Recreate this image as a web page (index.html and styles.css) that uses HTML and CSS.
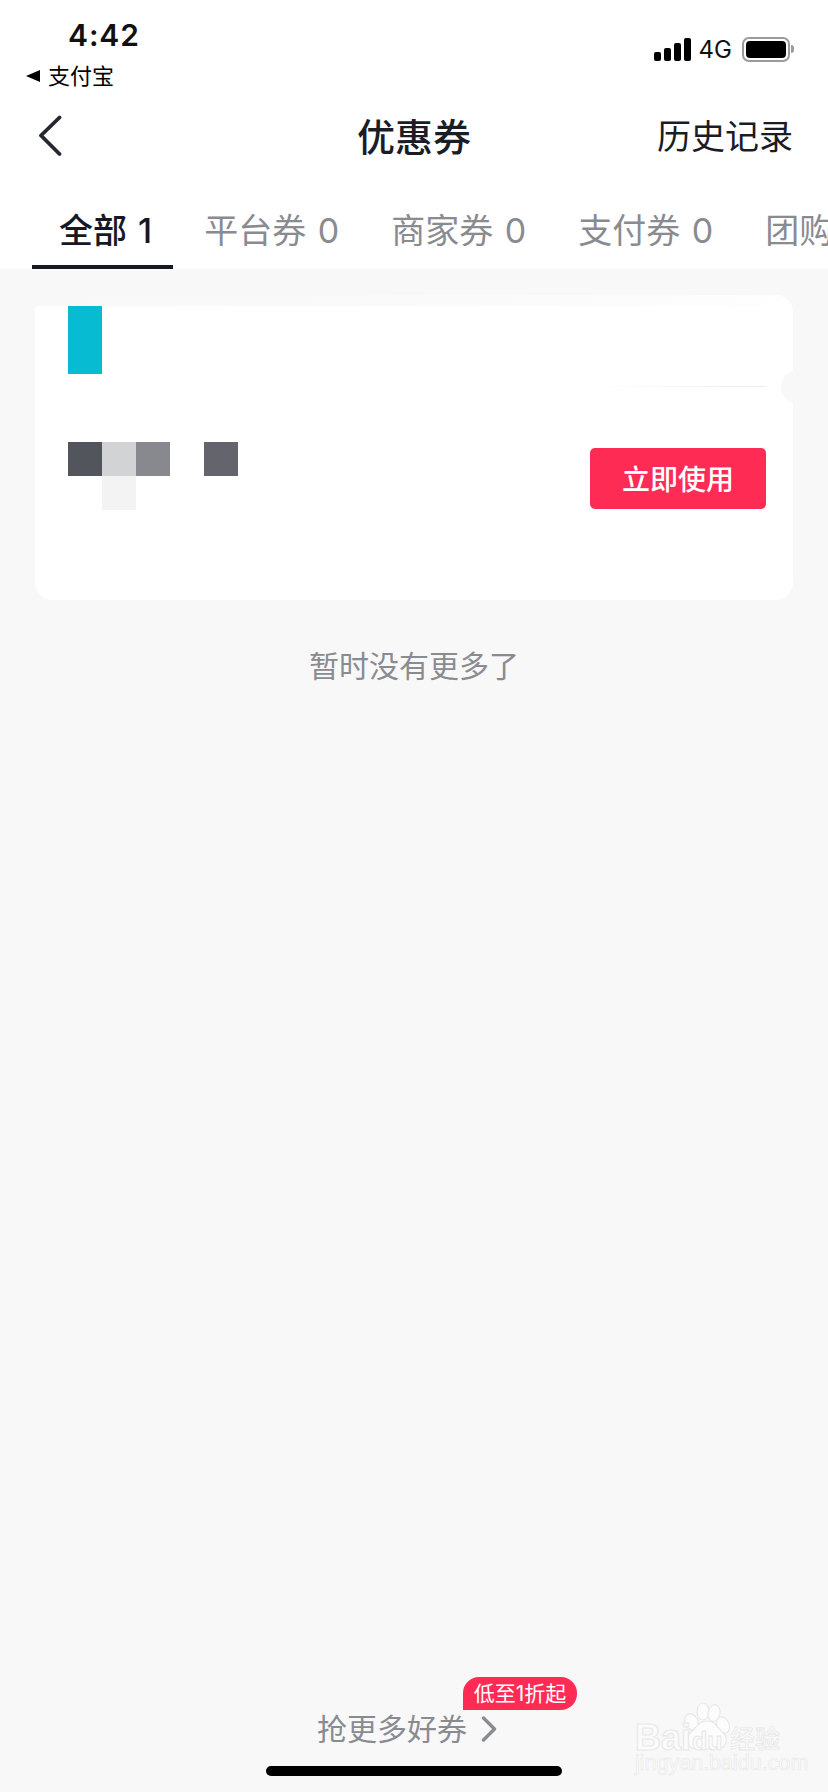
FILE: index.html
```html
<!DOCTYPE html>
<html lang="zh">
<head>
<meta charset="utf-8">
<title>优惠券</title>
<link rel="stylesheet" href="styles.css">
</head>
<body>
<div class="page">
  <header class="head">
    <div class="status">
      <div class="status-left">
        <div class="time">4:42</div>
        <div class="return"><span class="tri"></span><span>支付宝</span></div>
      </div>
      <div class="status-right">
        <span class="signal"><i class="b1"></i><i class="b2"></i><i class="b3"></i><i class="b4"></i></span>
        <span class="net">4G</span>
        <span class="battery"><span class="level"></span></span>
        <span class="nub"></span>
      </div>
    </div>
    <nav class="navbar">
      <svg class="back" width="24" height="42" viewBox="0 0 24 42"><path d="M21.5 2.5 3 20.5 21.5 39" fill="none" stroke="#242630" stroke-width="3.8" stroke-linecap="round" stroke-linejoin="round"/></svg>
      <h1 class="title">优惠券</h1>
      <span class="history">历史记录</span>
    </nav>
    <div class="tabs">
      <span class="tab active">全部 1</span>
      <span class="tab">平台券 0</span>
      <span class="tab">商家券 0</span>
      <span class="tab">支付券 0</span>
      <span class="tab">团购</span>
    </div>
  </header>

  <main class="content">
    <section class="card">
      <div class="card-top"><div class="logo-block"></div></div>
      <div class="card-bottom">
        <div class="mosaic">
          <i class="m1"></i><i class="m2"></i><i class="m3"></i><i class="m0"></i><i class="m4"></i>
          <i class="m0"></i><i class="m5"></i>
        </div>
        <button class="use">立即使用</button>
      </div>
      <span class="rule"></span>
      <span class="notch"></span>
    </section>
    <p class="nomore">暂时没有更多了</p>
  </main>

  <footer class="foot">
    <div class="more">
      <span>抢更多好券</span>
      <svg class="more-arrow" width="16" height="26" viewBox="0 0 16 26"><path d="M2.5 2 13.5 13 2.5 24" fill="none" stroke="#8a8b91" stroke-width="3.4" stroke-linecap="round" stroke-linejoin="round"/></svg>
      <span class="badge">低至1折起</span>
    </div>
    <div class="home"></div>
  </footer>

  <svg class="mark" width="190" height="102" viewBox="0 0 190 102">
    <g class="mark-shape">
      <ellipse cx="71.5" cy="32" rx="6.5" ry="8.5" transform="rotate(-25 71.5 32)"/>
      <ellipse cx="83" cy="21.5" rx="6" ry="8.5"/>
      <ellipse cx="94" cy="23" rx="6" ry="8.5" transform="rotate(10 94 23)"/>
      <ellipse cx="103" cy="35" rx="6" ry="8.5" transform="rotate(-25 103 35)"/>
      <path d="M87 31c8 0 11 7 16 12 5 4 4 13-2 15-5 2-9 1-14 1-5 0-10 2-15-1-6-3-6-11-2-15 6-4 8-12 17-12z"/>
    </g>
    <text class="mark-bai" x="15" y="60">Bai</text>
    <text class="mark-du" x="72" y="60">du</text>
    <text class="mark-cn" x="110" y="58">经验</text>
    <text class="mark-url" x="15" y="80">jingyan.baidu.com</text>
  </svg>
</div>
</body>
</html>
```
FILE: styles.css
```css
* { box-sizing: border-box; }
html, body { margin: 0; padding: 0; }
body {
  width: 828px;
  height: 1792px;
  overflow: hidden;
  background: #f8f8f8;
  color: #161823;
  font-family: "Inter", "Noto Sans CJK SC", sans-serif;
}
.page {
  position: relative;
  width: 828px;
  height: 1792px;
  display: flex;
  flex-direction: column;
  overflow: hidden;
}
.head { background: #fff; height: 269px; flex: none; }
.status {
  height: 100px;
  display: flex;
  justify-content: space-between;
}
.status-left { padding: 17px 0 0 26px; }
.time {
  font-size: 30px;
  line-height: 36px;
  font-weight: 600;
  color: #111;
  margin-left: 42px;
  letter-spacing: 0.9px;
}
.return {
  display: flex;
  align-items: center;
  gap: 8px;
  font-size: 22px;
  line-height: 30px;
  margin-top: 8px;
  color: #000;
}
.tri {
  width: 0;
  height: 0;
  border-style: solid;
  border-width: 6.5px 14px 6.5px 0;
  border-color: transparent #000 transparent transparent;
}
.status-right {
  display: flex;
  align-items: flex-start;
  padding: 37px 34px 0 0;
}
.signal {
  display: flex;
  align-items: flex-end;
  gap: 3px;
  height: 24px;
  margin-right: 8px;
}
.signal i { width: 7px; background: #000; border-radius: 2px; display: block; }
.signal .b1 { height: 9px; }
.signal .b2 { height: 13px; }
.signal .b3 { height: 18px; }
.signal .b4 { height: 23px; }
.net { font-size: 24px; line-height: 26px; margin-right: 10px; color: #111; }
.battery {
  width: 48px;
  height: 25px;
  border: 2px solid #9b9b9b;
  border-radius: 7px;
  padding: 2px;
  display: block;
}
.level { display: block; height: 100%; width: 100%; background: #000; border-radius: 4px; }
.nub {
  width: 3px;
  height: 8px;
  margin-top: 8px;
  margin-left: 1px;
  background: #9b9b9b;
  border-radius: 0 3px 3px 0;
}
.navbar {
  height: 70px;
  display: flex;
  align-items: center;
  justify-content: space-between;
  padding: 3px 35px 0 38px;
  position: relative;
}
.back { margin-top: -1px; }
.title {
  margin: 0;
  font-size: 38px;
  font-weight: 500;
  line-height: 50px;
  color: #1a1c26;
  position: absolute;
  left: 0;
  right: 0;
  text-align: center;
}
.history { font-size: 34px; line-height: 46px; color: #1a1c26; }
.tabs {
  display: flex;
  height: 99px;
  padding-left: 32px;
  white-space: nowrap;
  overflow: hidden;
}
.tab {
  flex: none;
  height: 99px;
  padding: 39px 26px 0;
  line-height: 44px;
  font-size: 34px;
  word-spacing: 2px;
  color: #8a8b91;
}
.tab.active {
  color: #161823;
  font-weight: 500;
  position: relative;
  padding-left: 27px;
}
.tab.active::after {
  content: "";
  position: absolute;
  left: 0;
  width: 141px;
  bottom: 0;
  height: 4px;
  background: #161823;
}
.content { flex: 1; padding: 26px 35px 0; }
.card {
  position: relative;
  height: 305px;
  background: #fff;
  border-radius: 18px;
  overflow: hidden;
}
.card::before {
  content: "";
  position: absolute;
  left: 0;
  right: 0;
  top: 0;
  height: 11px;
  background: linear-gradient(to right, #f8f8f8, #fafafa 60%, #fdfdfd 92%, #fff);
}
.card-top {
  height: 91px;
  padding: 11px 0 0 33px;
}
.logo-block { width: 34px; height: 68px; background: #07bbd3; }
.card-bottom {
  display: flex;
  justify-content: space-between;
  align-items: flex-start;
  padding: 56px 27px 0 33px;
}
.mosaic {
  display: grid;
  grid-template-columns: repeat(5, 34px);
  grid-auto-rows: 34px;
}
.mosaic i { display: block; }
.m1 { background: #53555d; }
.m2 { background: #d2d3d5; }
.m3 { background: #88898e; }
.m4 { background: #63646c; }
.m5 { background: #f3f3f3; }
.use {
  width: 176px;
  height: 61px;
  margin-top: 6px;
  border: 0;
  border-radius: 5px;
  background: #fe2c55;
  color: #fff;
  font: 500 28px/61px "Noto Sans CJK SC", sans-serif;
  padding: 0;
}
.rule {
  position: absolute;
  right: 27px;
  top: 91px;
  width: 176px;
  height: 1px;
  background: linear-gradient(to right, #fff, #ececec);
}
.notch {
  position: absolute;
  right: -22px;
  top: 75px;
  width: 34px;
  height: 34px;
  border-radius: 50%;
  background: #f8f8f8;
}
.nomore {
  margin: 44px 0 0;
  text-align: center;
  font-size: 30px;
  line-height: 44px;
  color: #8a8b91;
}
.foot { flex: none; height: 115px; display: flex; flex-direction: column; align-items: center; }
.more {
  position: relative;
  display: flex;
  align-items: center;
  gap: 14px;
  font-size: 30px;
  line-height: 40px;
  color: #8a8b91;
  height: 40px;
  margin-top: 32px;
  margin-right: 14px;
}
.badge {
  position: absolute;
  left: 146px;
  top: -32px;
  width: 114px;
  height: 33px;
  border-radius: 16px 16px 16px 0;
  background: #fe2c55;
  color: #fff;
  font-size: 21px;
  line-height: 33px;
  text-align: center;
  white-space: nowrap;
}
.home {
  width: 296px;
  height: 10px;
  margin-top: 17px;
  background: #000;
  border-radius: 5px;
}
.mark {
  position: absolute;
  left: 620px;
  top: 1690px;
}
.mark-shape { fill: #fcfcfc; stroke: #e8e8e8; stroke-width: 1.2; }
.mark-bai, .mark-du, .mark-cn, .mark-url { fill: #fbfbfb; stroke: #e8e8e8; }
.mark-bai { font: 700 36px "Liberation Sans", sans-serif; stroke-width: 1.1; }
.mark-du { font: 700 25px "Liberation Sans", sans-serif; stroke-width: 1; }
.mark-cn { font: 500 25px "Noto Sans CJK SC", sans-serif; stroke-width: 0.8; }
.mark-url { font: 400 21.5px "Liberation Sans", sans-serif; stroke-width: 0.6; }
```
